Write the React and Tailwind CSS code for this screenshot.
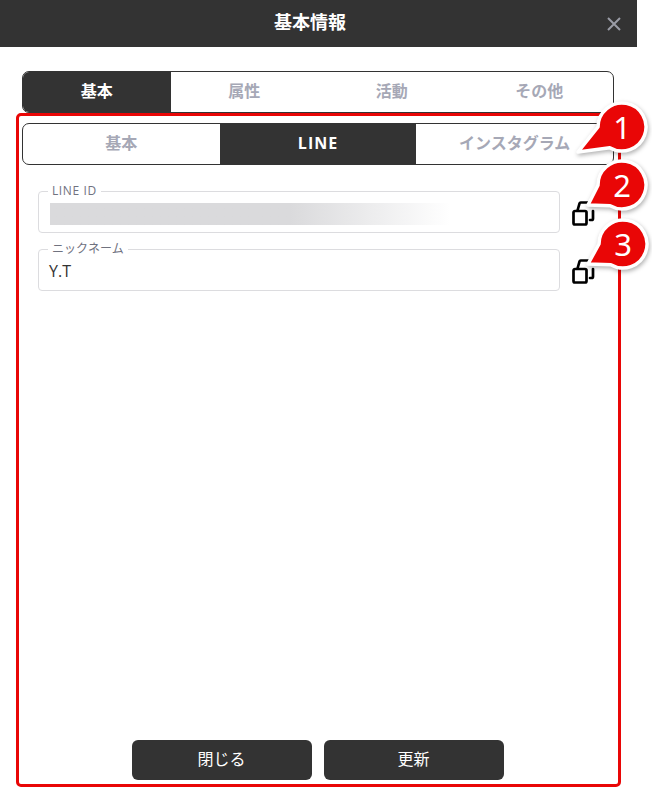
const FONT = "font-['Open_Sans','Noto_Sans_CJK_JP',sans-serif]";

const TABS = ["基本", "属性", "活動", "その他"];
const SUB_TABS = ["基本", "LINE", "インスタグラム"];

/**
 * TabBar — segmented tabs, the active one is filled dark
 */
const TabBar = ({ items, active, className }) => (
    <div className={`flex h-[42px] overflow-hidden rounded-[7px] border border-[#333] bg-white ${className}`}>
        {items.map((item) => (
            <div
                key={item}
                className={`flex flex-1 items-center justify-center pb-[2px] text-base font-bold ${
                    item === "LINE" ? "tracking-[1px]" : ""
                } ${item === active ? "bg-[#333] text-white" : "text-[#a6a8b6]"}`}
            >
                {item}
            </div>
        ))}
    </div>
);

const CopyIcon = () => (
    <svg width="23" height="25" viewBox="0 0 23 25" fill="none" stroke="#000" strokeWidth="2.7" strokeLinejoin="round" strokeLinecap="round">
        <path d="M3 10 H13 a1.5 1.5 0 0 1 1.5 1.5 V22 a1.5 1.5 0 0 1 -1.5 1.5 H3 a1.5 1.5 0 0 1 -1.5 -1.5 V11.5 A1.5 1.5 0 0 1 3 10 Z" />
        <path d="M5.5 9.5 L7.5 2.5 a1.5 1.5 0 0 1 1.3 -1 H16" />
        <path d="M21 10 V17.5 a1.5 1.5 0 0 1 -1.5 1.5 H18" />
    </svg>
);

const Field = ({ label, labelClass = "", children }) => (
    <div className="flex items-center">
        <fieldset className="h-[48px] w-[522px] rounded-[4px] border border-[#dcdcdf] px-[10px] -mt-[6px]">
            <legend className={`-ml-[1px] px-[4px] text-xs leading-[12px] text-[#70727f] ${labelClass}`}>{label}</legend>
            {children}
        </fieldset>
        <div className="ml-[12px] mt-[2px]">
            <CopyIcon />
        </div>
    </div>
);

// speech bubble with its tail pointing at the tip, coordinates are page pixels
const Callout = ({ n, cx, cy, tipX, tipY }) => {
    const r = 24;
    const angle = Math.atan2(tipY - cy, tipX - cx);
    const spread = 0.52;
    const ax = cx + r * Math.cos(angle + spread);
    const ay = cy + r * Math.sin(angle + spread);
    const bx = cx + r * Math.cos(angle - spread);
    const by = cy + r * Math.sin(angle - spread);

    return (
        <>
            <svg width="652" height="808" className="pointer-events-none absolute inset-0">
                <path
                    d={`M${tipX} ${tipY} L${ax} ${ay} A${r} ${r} 0 1 1 ${bx} ${by} Z`}
                    fill="#e90606"
                    stroke="#fff"
                    strokeWidth="3.5"
                    strokeLinejoin="round"
                    style={{ filter: "drop-shadow(1px 2px 2px rgba(0,0,0,.3))" }}
                />
            </svg>
            <span
                className="absolute flex h-[46px] w-[46px] -translate-x-1/2 -translate-y-1/2 items-center justify-center font-['Noto_Sans'] text-[31px] text-white"
                style={{ left: cx, top: cy }}
            >
                {n}
            </span>
        </>
    );
};

const App = () => (
    <div className={`relative h-[808px] w-[652px] overflow-hidden bg-white ${FONT}`}>
        <div className="w-[637px]">
            <header className="relative flex h-[47px] items-center justify-center bg-[#333] pb-[3px] pr-[17px] text-lg font-bold text-white">
                基本情報
                <svg className="absolute right-[16px] top-[17px]" width="14" height="14" viewBox="0 0 14 14" stroke="#9a9ca6" strokeWidth="2">
                    <path d="M1 1 L13 13 M13 1 L1 13" />
                </svg>
            </header>

            <div className="pt-[24px]">
                <TabBar items={TABS} active="基本" className="mx-[22px] w-[592px]" />

                <section className="ml-[16px] flex h-[674px] w-[605px] flex-col rounded-[5px] border-[3px] border-[#e90606] px-[3px] pt-[7px]">
                    <TabBar items={SUB_TABS} active="LINE" className="w-[592px]" />

                    <div className="flex flex-col gap-[16px] px-[16px] pt-[26px]">
                        <Field label="LINE ID" labelClass="tracking-[0.6px]">
                            <div className="ml-[1px] mt-[6px] h-[22px] w-[400px] bg-gradient-to-r from-[#dadadc] from-60% to-white" />
                        </Field>
                        <Field label="ニックネーム">
                            <div className="pt-[5px] text-base leading-[22px] text-[#333]">Y.T</div>
                        </Field>
                    </div>

                    <div className="mt-auto mb-[4px] flex justify-center gap-[12px] pr-[2px]">
                        <button className="h-[40px] w-[180px] rounded-[6px] bg-[#333] pb-[2px] text-base text-white">閉じる</button>
                        <button className="h-[40px] w-[180px] rounded-[6px] bg-[#333] pb-[2px] text-base text-white">更新</button>
                    </div>
                </section>
            </div>
        </div>

        <Callout n="1" cx={622} cy={127} tipX={578} tipY={152} />
        <Callout n="2" cx={622} cy={185} tipX={588} tipY={205} />
        <Callout n="3" cx={623} cy={244} tipX={588} tipY={264} />
    </div>
);

export default App;
